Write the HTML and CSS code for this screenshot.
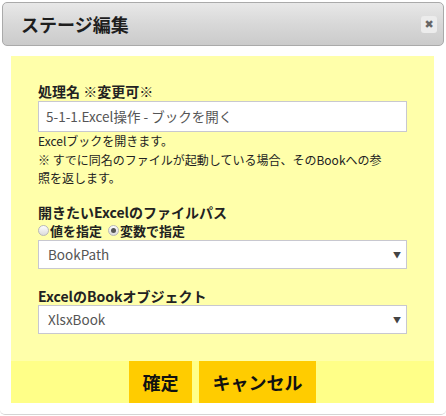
FILE: index.html
```
<!DOCTYPE html>
<html>
<head>
<meta charset="utf-8">
<link rel="stylesheet" href="styles.css">
</head>
<body>
<div class="dialog">
  <div class="titlebar">
    <span class="title">ステージ編集</span>
    <span class="close">✖</span>
  </div>
  <div class="panel">
    <div class="body">
      <div class="label">処理名 ※変更可※</div>
      <div class="input">5-1-1.Excel操作 - ブックを開く</div>
      <div class="desc">Excelブックを開きます。<br>※ すでに同名のファイルが起動している場合、そのBookへの参照を返します。</div>
      <div class="label gap">開きたいExcelのファイルパス</div>
      <div class="radios">
        <span class="radio"></span><span class="rlabel">値を指定</span>
        <span class="radio checked"></span><span class="rlabel">変数で指定</span>
      </div>
      <div class="select"><span>BookPath</span><span class="arrow">▼</span></div>
      <div class="label gap2">ExcelのBookオブジェクト</div>
      <div class="select"><span>XlsxBook</span><span class="arrow">▼</span></div>
    </div>
    <div class="footer">
      <span class="btn">確定</span>
      <span class="btn">キャンセル</span>
    </div>
  </div>
</div>
</body>
</html>
```
FILE: styles.css
```
html, body {
  margin: 0;
  padding: 0;
  background: #fff;
}
body {
  font-family: "Noto Sans CJK JP", sans-serif;
  color: #222;
  width: 446px;
  height: 416px;
  overflow: hidden;
}
.dialog {
  width: 446px;
  height: 415px;
  box-sizing: border-box;
  padding-top: 2px;
  border-bottom: 1px solid #d4d4d4;
  border-radius: 0 0 5px 5px;
}
.titlebar {
  margin: 0 2px;
  height: 44px;
  box-sizing: border-box;
  border: 1px solid #aaa;
  border-radius: 5px;
  background: linear-gradient(#e8e8e8, #d8d8d8 50%, #cbcbcb);
  display: flex;
  align-items: center;
  justify-content: space-between;
  padding: 0 6px 0 18px;
}
.title {
  font-size: 18px;
  font-weight: bold;
  color: #1e1e1e;
  line-height: 20px;
}
.close {
  width: 16px;
  height: 17px;
  border-radius: 3px;
  background: #ececec;
  color: #666;
  font-size: 11px;
  line-height: 17px;
  text-align: center;
  font-family: "DejaVu Sans", sans-serif;
  font-weight: bold;
}
.panel {
  margin: 10px 12px 0 11px;
  background: #ffffaa;
}
.body {
  padding: 26px 27px 27px 27px;
}
.label {
  font-size: 14px;
  font-weight: bold;
  line-height: 18px;
  height: 19px;
  color: #222;
}
.label.gap {
  margin-top: 15px;
  height: 18px;
}
.label.gap2 {
  margin-top: 18px;
  height: 18px;
}
.input, .select {
  background: #fff;
  border: 1px solid #c8c8d0;
  box-sizing: border-box;
  font-size: 13.5px;
  color: #555;
}
.input {
  height: 31px;
  line-height: 29px;
  padding-left: 7px;
}
.select {
  height: 29px;
  display: flex;
  align-items: center;
  justify-content: space-between;
  padding: 0 5px 0 9px;
}
.arrow {
  font-size: 8px;
  color: #444;
}
.desc {
  font-size: 12px;
  line-height: 18.5px;
  color: #222;
  padding-right: 20px;
}
.radios {
  display: flex;
  align-items: center;
  height: 19px;
  padding-top: 1px;
  box-sizing: border-box;
  font-size: 13px;
  font-weight: bold;
}
.radio {
  width: 9px;
  height: 9px;
  border-radius: 50%;
  border: 1px solid #b8b8b8;
  background: linear-gradient(#fdfdfd, #dcdcdc);
  margin-right: 1px;
  position: relative;
}
.radio.checked::after {
  content: "";
  position: absolute;
  left: 2px;
  top: 2px;
  width: 5px;
  height: 5px;
  border-radius: 50%;
  background: #555;
}
.rlabel {
  margin-right: 6px;
}
.footer {
  height: 42px;
  background: #ffff88;
  display: flex;
  justify-content: center;
  gap: 7px;
}
.btn {
  background: #ffcc00;
  font-size: 18px;
  font-weight: bold;
  color: #111;
  padding: 0 13.5px;
  line-height: 42px;
}
```
